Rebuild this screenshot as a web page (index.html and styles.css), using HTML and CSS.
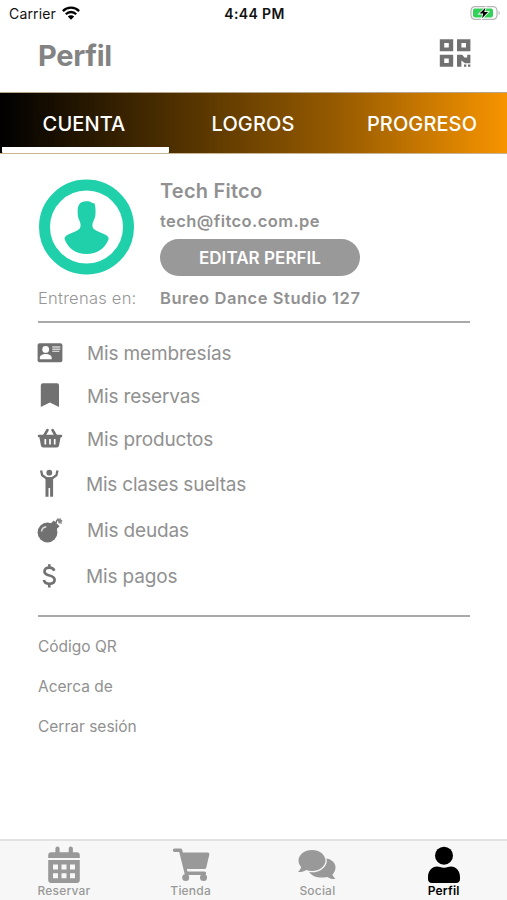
FILE: index.html
```html
<!DOCTYPE html>
<html lang="es">
<head>
<meta charset="utf-8">
<title>Perfil</title>
<link rel="stylesheet" href="styles.css">
</head>
<body>
<div class="app">
  <div class="status">
    <div class="carrier"><span>Carrier</span>
      <svg width="18" height="14" viewBox="0 0 18 14"><g fill="none" stroke="#000" stroke-width="2.3"><path d="M.9 5.1a11.4 11.4 0 0 1 16.2 0"/><path d="M3.8 8.2a7.3 7.3 0 0 1 10.4 0"/></g><path d="M5.8 10.6a4.5 4.5 0 0 1 6.4 0L9 13.8z"/></svg>
    </div>
    <span class="time">4:44 PM</span>
    <div class="battery">
      <svg width="31" height="16" viewBox="0 0 31 16"><rect x="1" y="1.6" width="26" height="12.8" rx="4" fill="#fff" stroke="#b5b5b5" stroke-width="1.2"/><path d="M28.6 5.5q2.4 2.500 0 5z" fill="#b5b5b5"/><rect x="3" y="3.600" width="20" height="8.800" rx="1.800" fill="#34d158"/><path d="M15.400 2.800 9.500 8.600h3.600l-1 4.600 6-6.100h-3.800z" stroke="#fff" stroke-width="1.600" paint-order="stroke"/></svg>
    </div>
  </div>
  <header class="head">
    <h1>Perfil</h1>
    <svg width="32" height="30" viewBox="0 0 32 30" fill="#717171"><path fill-rule="evenodd" d="M.8 1.200h13.400v12H.8zM5.200 5v4.400h4.600V5zM18 1.200h13.400v12H18zM22.400 5v4.400H27V5zM.8 16.800h13.400v12H.8zM5.200 20.600V25h4.600v-4.400z"/><path d="M18 16.800h5.200l2.200 2.800h2.800v-2.800h3.200v8.400h-5.400l-3.600-2.800v6.400H18zM25 26.500h2.300v2.300H25zM29 26.500h2.400v2.300H29z"/></svg>
  </header>
  <nav class="tabs">
    <div class="tab active"><span>CUENTA</span></div>
    <div class="tab"><span>LOGROS</span></div>
    <div class="tab"><span>PROGRESO</span></div>
  </nav>
  <main class="content">
    <section class="profile">
      <svg class="avatar" width="96" height="96" viewBox="0 0 96 96"><circle cx="48.500" cy="48" r="42" fill="none" stroke="#1fd0ab" stroke-width="11"/><path fill="#1fd0ab" d="M48.500 22.300c2 0 4 .4 5.300 1.500l2.700.7c1 3 1.200 6 1 9.500 0 3-.7 5.500-2 8-1.200 2.500-1.500 5-.5 7 1 1.500 2.500 2.300 4.500 3.200l7 3c3 1.300 4.200 2.800 4.200 4.800-3.500 9.500-11.500 15-22.200 15S30 69.500 26.500 60c0-2 1.200-3.500 4.200-4.800l7-3c2-.9 3.500-1.700 4.300-3.200 1-2 .7-4.500-.4-7-1.300-2.500-1.900-5-1.900-8-.3-6.500.8-11.700 8.800-11.700z"/></svg>
      <div class="who">
        <div class="name">Tech Fitco</div>
        <div class="mail">tech@fitco.com.pe</div>
        <button class="edit"><span>EDITAR PERFIL</span></button>
      </div>
      <div class="train">Entrenas en:</div>
      <div class="studio">Bureo Dance Studio 127</div>
    </section>
    <ul class="menu">
      <li class="r1"><svg width="26" height="30" viewBox="0 0 26 30"><rect x=".6" y="5.300" width="24.800" height="19" rx="2"/><g fill="#fff"><circle cx="8.700" cy="11.400" r="3.400"/><path d="M2.800 21.300v-1.400c0-3 3-4 5.900-4s6 1 6 4v1.400z"/></g><path d="M15.300 9h8M15.300 11.200h8M15.300 13.400h7" stroke="#d5d5d5" stroke-width="1.400"/></svg><span>Mis membresías</span></li>
      <li class="r2"><svg width="26" height="30" viewBox="0 0 26 30"><path d="M6 2.300h14q2 0 2 2V26l-9.100-4.600L3.800 26V4.300q0-2 2.200-2z"/></svg><span>Mis reservas</span></li>
      <li class="r3"><svg width="26" height="30" viewBox="0 0 26 30"><path d="M10.500 6 7 12M15.500 6l3.500 6" stroke="#717171" stroke-width="2.600" stroke-linecap="round"/><path d="M1.800 10.700h22.400q1 0 1 1v.6q0 1-1 1h-.6l-1.600 8.400q-.3 1.800-2.200 1.800H6.200q-1.900 0-2.200-1.800l-1.600-8.400h-.6q-1 0-1-1v-.6q0-1 1-1z"/><path d="M8.300 15v5.500M13 15v5.500M17.700 15v5.500" stroke="#fff" stroke-width="1.700"/></svg><span>Mis productos</span></li>
      <li class="r4"><svg width="26" height="30" viewBox="0 0 26 30"><circle cx="12.300" cy="3.700" r="2.900"/><path d="m4.100 1.500 1.100 4.800 4.600 3.200h5l4.600-3.200 1.100-4.800" fill="none" stroke="#717171" stroke-width="2.300"/><path d="M8.500 8.300h7.600v19.500h-3V19h-1.600v8.800h-3z"/></svg><span>Mis clases sueltas</span></li>
      <li class="r5"><svg width="26" height="30" viewBox="0 0 26 30"><circle cx="10.500" cy="16.500" r="9.900"/><path d="m13.500 7.700 3.300-3.100 5.700 5.700-3.300 3.300z"/><path d="M19 7.200q.5-4 3.200-3.600" fill="none" stroke="#717171" stroke-width="1.600"/><path d="m20 2 2 1 1.500-1 .6 1.700 1.500.8-1 1.500.3 1.900-1.700-.6-1.400.5z" fill="#888"/><path d="M4.500 15.500q.6-4.200 4.800-4.700" fill="none" stroke="#ddd" stroke-width="1.500"/></svg><span>Mis deudas</span></li>
      <li class="r6"><svg width="26" height="30" viewBox="0 0 26 30"><path d="M17.300 9.700C16.600 7.700 15 6.700 12.300 6.700c-3 0-4.800 1.300-4.800 3.700 0 5.600 10.100 2.600 10.100 8.400 0 2.600-2.300 4-5.300 4-3 0-4.900-1.300-5.400-3.800M12.300 3.200v4M12.300 22.500v4" fill="none" stroke="#717171" stroke-width="2.700"/></svg><span>Mis pagos</span></li>
    </ul>
    <ul class="links">
      <li><span>Código QR</span></li>
      <li><span>Acerca de</span></li>
      <li><span>Cerrar sesión</span></li>
    </ul>
  </main>
  <nav class="bottom">
    <div class="item"><svg width="40" height="40" viewBox="0 0 40 40"><path d="M13.500 3.500v7M26.800 3.500v7" stroke="#999" stroke-width="4.200" stroke-linecap="round"/><path d="M7.200 7.200h25.600q3 0 3 3v2.700H4.200v-2.700q0-3 3-3zM4.200 15h31.600v20q0 3-3 3H7.200q-3 0-3-3z"/><path d="M9 19.500h5v5H9zm8.500 0h5v5h-5zm8.500 0h5v5h-5zM9 28.300h5v5H9zm8.500 0h5v5h-5zm8.500 0h5v5h-5z" fill="#f7f7f7"/></svg><span class="wide">Reservar</span></div>
    <div class="item"><svg width="40" height="40" viewBox="0 0 40 40"><path d="M3.500 5.200h6l5.700 23h18.300" fill="none" stroke="#999" stroke-width="3.400" stroke-linecap="round" stroke-linejoin="round"/><path d="M10.500 7.600h26.300q1.800 0 1.500 1.800l-3 13q-.4 1.600-2 1.600H14.500z"/><circle cx="14.700" cy="32.500" r="3.500"/><circle cx="32.500" cy="32.500" r="3.500"/></svg><span class="wide">Tienda</span></div>
    <div class="item"><svg width="40" height="40" viewBox="0 0 40 40"><path d="M26 13c7 0 12.500 4 12.500 9.600 0 3-1.200 5-3 6.800.5 1.800 1.500 3 3 4.500-3.600.2-6.300-.6-8.300-2-8 2-15.200-.4-18-5z"/><path d="M15 5C22.500 5 28.500 9.700 28.500 15.500S22.500 26 15 26c-2.200 0-4.200-.4-6-1.100C6.900 26.500 4.300 27.200 1 27c1.700-1.600 2.800-3.200 3.200-5C2.500 20.200 1.500 18 1.500 15.500 1.500 9.700 7.500 5 15 5z" stroke="#f7f7f7" stroke-width="2.600" paint-order="stroke"/></svg><span class="wide">Social</span></div>
    <div class="item on"><svg width="40" height="40" viewBox="0 0 40 40"><circle cx="20" cy="10.700" r="9"/><path d="M13 21.500c2.500 0 3.500 1.200 7 1.200s4.500-1.200 7-1.200c5 0 9 4.500 9 10.500V34c0 2.500-1.500 4-4 4H8c-2.500 0-4-1.500-4-4v-2c0-6 4-10.500 9-10.500z"/></svg><span class="wide">Perfil</span></div>
  </nav>
</div>
</body>
</html>
```
FILE: styles.css
```css
* { box-sizing: border-box; }
body { margin: 0; background: #fff; font-family: Inter, "Liberation Sans", sans-serif; color: #919191; }
svg { display: block; flex: none; }
span { white-space: nowrap; }
ul { list-style: none; margin: 0; padding: 0; }
.app { width: 507px; height: 900px; display: flex; flex-direction: column; overflow: hidden; }

.status { height: 28px; display: grid; grid-template-columns: 1fr auto 1fr; align-items: center; padding: 0 6px 2px 9px; color: #111; font-size: 14px; flex: none; }
.carrier { display: flex; align-items: center; gap: 6px; letter-spacing: .15px; }
.time { font-weight: 600; padding-right: 1px; letter-spacing: .35px; }
.battery { display: flex; justify-content: flex-end; }

.head { height: 64px; flex: none; display: flex; justify-content: space-between; padding: 10px 36px 0 38px; }
.head h1 { margin: 0; font-size: 29px; line-height: 36px; font-weight: 700; letter-spacing: -.3px; color: #838383; }

.tabs { height: 62px; flex: none; display: grid; grid-template-columns: repeat(3, 1fr); background: linear-gradient(to right, #000 0%, #4b2e00 33%, #955a00 66%, #f79400 100%); color: #fff; font-size: 20px; font-weight: 500; border-top: 1px solid #b5a58c; border-bottom: 1px solid #c8b493; }
.tab { display: flex; align-items: center; justify-content: center; padding: 2px 1px 0 0; letter-spacing: .1px; }
.active { border-bottom: 6px solid #fff; padding: 8px 3px 0 0; margin-left: 2px; border-radius: 1px; }

.content { flex: 1; padding: 0 37px 0 38px; }
.profile { display: grid; grid-template-columns: 122px 1fr; grid-template-rows: 130px 37px; border-bottom: 2px solid #a9a9a9; height: 169px; }
.avatar { margin-top: 25px; }
.who { padding-top: 24px; }
.name { font-size: 20px; line-height: 26px; font-weight: 600; letter-spacing: .22px; }
.mail { font-size: 16.500px; line-height: 22px; font-weight: 600; margin-top: 6px; letter-spacing: .42px; }
.edit { display: block; width: 200px; height: 37px; margin: 7px 0 0; padding: 0; border: 0; border-radius: 19px; background: #999; color: #fff; font: 600 17px Inter, sans-serif; letter-spacing: .05px; }
.train { font-size: 16.500px; line-height: 29px; color: #969696; font-weight: 300; letter-spacing: .25px; }
.studio { font-size: 16.500px; line-height: 29px; font-weight: 600; letter-spacing: .55px; }

.menu { padding: 9px 0 16px; height: 294px; border-bottom: 2px solid #a9a9a9; font-size: 19px; letter-spacing: -.15px; }
.menu li { display: flex; align-items: center; gap: 24px; margin-left: -1px; }
.menu svg { fill: #717171; }
.menu .r1, .menu .r3 { height: 42px; }
.menu .r2 { height: 44px; }
.menu .r4 { height: 48px; gap: 23px; letter-spacing: -.22px; }
.menu .r5 { height: 45px; }
.menu .r6 { height: 46px; gap: 23px; }

.links { padding-top: 9px; font-size: 15.500px; }
.links li { height: 40.300px; display: flex; align-items: center; }

.bottom { height: 61px; flex: none; display: grid; grid-template-columns: repeat(4, 1fr); background: #f7f7f7; border-top: 2px solid #e2e2e2; font-size: 12px; font-weight: 500; color: #999; }
.item { display: flex; flex-direction: column; align-items: center; padding: 4px 0 0 1px; }
.item svg { fill: #999; }
.wide { line-height: 14px; margin-top: -1px; letter-spacing: .2px; }
.on { color: #000; font-weight: 600; padding-left: 0; }
.on svg { fill: #000; }
```
